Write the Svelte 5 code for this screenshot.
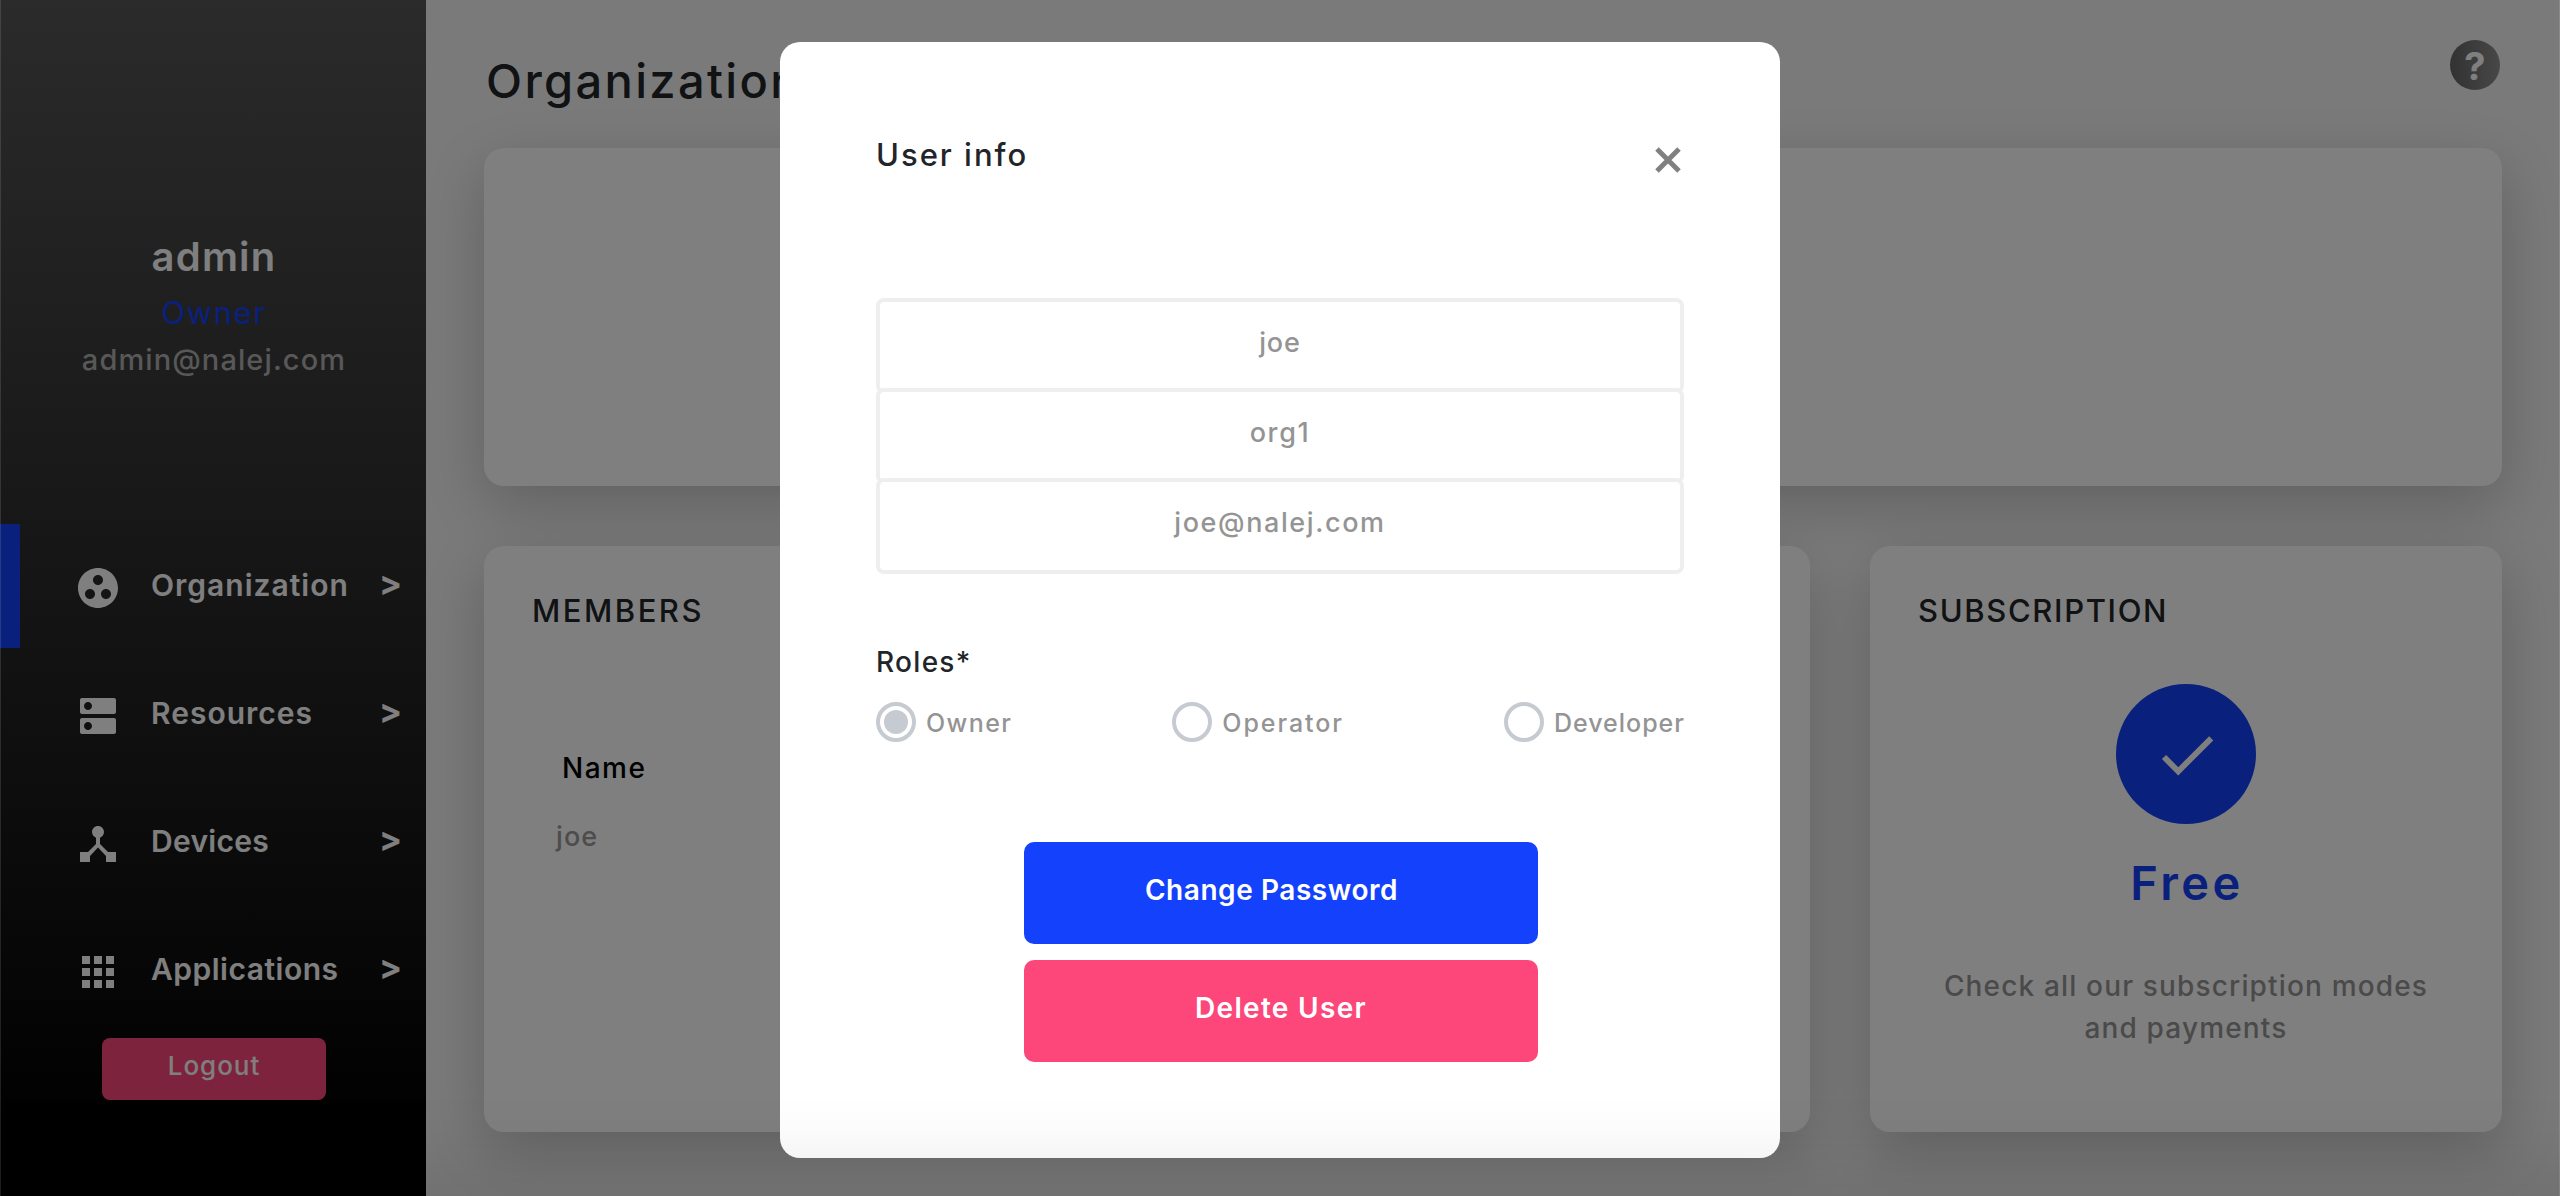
<script>
  const nav = [
    { label: 'Organization', icon: 'group', active: true, cls: 'l1' },
    { label: 'Resources', icon: 'dns', active: false, cls: 'l2' },
    { label: 'Devices', icon: 'hub', active: false, cls: 'l3' },
    { label: 'Applications', icon: 'apps', active: false, cls: 'l4' }
  ];
  const icons = {
    group: 'M12 2C6.48 2 2 6.48 2 12s4.48 10 10 10 10-4.48 10-10S17.52 2 12 2zM8 17.5c-1.38 0-2.5-1.12-2.5-2.5s1.12-2.5 2.5-2.5 2.5 1.12 2.5 2.5-1.12 2.5-2.5 2.5zM9.5 8c0-1.38 1.12-2.5 2.5-2.5s2.5 1.12 2.5 2.5-1.12 2.5-2.5 2.5S9.5 9.38 9.5 8zm6.5 9.5c-1.38 0-2.5-1.12-2.5-2.5s1.12-2.5 2.5-2.5 2.5 1.12 2.5 2.5-1.12 2.5-2.5 2.5z',
    dns: 'M20 13H4c-.55 0-1 .45-1 1v6c0 .55.45 1 1 1h16c.55 0 1-.45 1-1v-6c0-.55-.45-1-1-1zM7 19c-1.1 0-2-.9-2-2s.9-2 2-2 2 .9 2 2-.9 2-2 2zM20 3H4c-.55 0-1 .45-1 1v6c0 .55.45 1 1 1h16c.55 0 1-.45 1-1V4c0-.55-.45-1-1-1zM7 9c-1.1 0-2-.9-2-2s.9-2 2-2 2 .9 2 2-.9 2-2 2z',
    hub: 'M17 16l-4-4V8.82C14.16 8.4 15 7.3 15 6c0-1.66-1.34-3-3-3S9 4.34 9 6c0 1.3.84 2.4 2 2.82V12l-4 4H3v5h5v-3.05l4-4.2 4 4.2V21h5v-5h-4z',
    apps: 'M4 8h4V4H4v4zm6 12h4v-4h-4v4zm-6 0h4v-4H4v4zm0-6h4v-4H4v4zm6 0h4v-4h-4v4zm6-10v4h4V4h-4zm-6 4h4V4h-4v4zm6 6h4v-4h-4v4zm0 6h4v-4h-4v4z'
  };
  const fields = [
    { value: 'joe', cls: 'f1' },
    { value: 'org1', cls: 'f2' },
    { value: 'joe@nalej.com', cls: 'f3' }
  ];
  const roles = [
    { name: 'Owner', cls: 'r1' },
    { name: 'Operator', cls: 'r2' },
    { name: 'Developer', cls: 'r3' }
  ];
  let selected = 'Owner';
</script>

<div class="app">
  <aside>
    <div class="profile">
      <div class="name">admin</div>
      <div class="role">Owner</div>
      <div class="email">admin@nalej.com</div>
    </div>
    <nav>
      {#each nav as item}
        <a class="item" class:active={item.active} href="#top">
          <svg viewBox="0 0 24 24"><path d={icons[item.icon]} /></svg>
          <span class="label {item.cls}">{item.label}</span>
          <span class="chev">&gt;</span>
        </a>
      {/each}
    </nav>
    <button class="logout">Logout</button>
  </aside>

  <main>
    <header>
      <h1>Organization</h1>
      <div class="help">?</div>
    </header>
    <section class="card banner"></section>
    <div class="row">
      <section class="card">
        <h2 class="members">MEMBERS</h2>
        <div class="th">Name</div>
        <div class="td">joe</div>
      </section>
      <section class="card">
        <h2 class="subs">SUBSCRIPTION</h2>
        <div class="plan">
          <div class="badge">
            <svg viewBox="0 0 24 24"><path d="M9 16.17L4.83 12l-1.42 1.41L9 19 21 7l-1.41-1.41z" /></svg>
          </div>
          <div class="free">Free</div>
          <p>Check all our subscription modes<br />and payments</p>
        </div>
      </section>
    </div>
  </main>
</div>

<div class="overlay">
  <div class="modal">
    <div class="head">
      <h3>User info</h3>
      <svg class="close" viewBox="0 0 26 26"><path d="M2 2L24 24M24 2L2 24" /></svg>
    </div>
    <div class="fields">
      {#each fields as f}
        <div class="field {f.cls}">{f.value}</div>
      {/each}
    </div>
    <div class="roles">Roles*</div>
    <div class="options">
      {#each roles as r}
        <div class="option">
          <span class="radio" class:on={selected === r.name}></span>
          <span class="opt {r.cls}">{r.name}</span>
        </div>
      {/each}
    </div>
    <button class="btn change">Change Password</button>
    <button class="btn delete">Delete User</button>
  </div>
</div>
<div class="shade"></div>

<style>
  :global(body) {
    overflow: hidden;
    font-family: Inter, Roboto, sans-serif;
  }
  h1, h2, h3, p { margin: 0; font-weight: 500; }
  button { border: 0; padding: 0; font-family: inherit; color: #fff; }
  .app { display: flex; height: 1196px; background: #f4f4f4; }

  aside {
    width: 426px;
    flex: none;
    background: linear-gradient(#565656, #000 96%);
    color: #fff;
  }
  .profile { box-sizing: border-box; height: 524px; padding-top: 233px; text-align: center; }
  .name { padding-left: 2px; font-size: 40px; line-height: 48px; font-weight: 600; letter-spacing: 1.2px; }
  .role { margin-top: 12px; padding-left: 2px; font-size: 31px; line-height: 40px; letter-spacing: 1.6px; color: #1441fb; }
  .email { margin-top: 7px; padding-left: 2px; font-size: 29px; line-height: 40px; font-weight: 500; letter-spacing: 1.1px; color: #b0b0b0; }
  .item {
    box-sizing: border-box;
    display: flex;
    align-items: center;
    height: 124px;
    margin-bottom: 4px;
    padding: 0 24px 0 54px;
    border-left: 20px solid transparent;
    color: #fff;
    text-decoration: none;
    font-size: 30px;
    font-weight: 600;
  }
  .item.active { border-color: #1441fb; }
  .item svg { width: 48px; height: 48px; margin-top: 4px; fill: #fff; }
  .label { margin: 0 auto 3px 29px; line-height: 40px; }
  .l1 { letter-spacing: 1px; }
  .l2 { letter-spacing: 1px; }
  .l3 { letter-spacing: 0.3px; }
  .l4 { letter-spacing: 0.5px; }
  .chev { font-size: 34px; font-weight: 700; line-height: 40px; margin-bottom: 6px; }
  .logout {
    display: block;
    width: 224px;
    height: 62px;
    margin: 6px 0 0 102px;
    padding-bottom: 8px;
    border-radius: 8px;
    background: #fd477b;
    font-size: 26px;
    font-weight: 500;
    letter-spacing: 0.95px;
  }

  main { flex: 1; padding: 0 58px; color: #212529; }
  header { box-sizing: border-box; display: flex; justify-content: space-between; height: 148px; }
  h1 { margin: 53px 0 0 2px; font-size: 47px; line-height: 56px; letter-spacing: 2.35px; }
  .help {
    width: 50px;
    height: 50px;
    margin: 40px 2px 0 0;
    border-radius: 50%;
    background: linear-gradient(90deg, #646464, #909090);
    color: #fff;
    font-size: 38px;
    line-height: 52px;
    font-weight: 700;
    text-align: center;
  }
  .card { border-radius: 20px; background: #fff; box-shadow: 0 20px 60px rgba(0, 0, 0, 0.2); }
  .banner { height: 338px; margin-bottom: 60px; }
  .row { display: grid; grid-template-columns: 1326px 632px; gap: 60px; }
  .row .card { box-sizing: border-box; height: 586px; padding: 45px 0 0 48px; }
  h2 { font-size: 31px; line-height: 40px; }
  .members { letter-spacing: 2.5px; }
  .subs { letter-spacing: 1.65px; }
  .th { margin: 119px 0 0 30px; font-size: 28px; line-height: 36px; font-weight: 500; letter-spacing: 1.5px; color: #000; }
  .td { margin: 33px 0 0 24px; font-size: 27px; line-height: 36px; font-weight: 500; letter-spacing: 1.1px; color: #999; }
  .plan { margin: 53px 0 0 -48px; text-align: center; }
  .badge {
    display: flex;
    align-items: center;
    justify-content: center;
    width: 140px;
    height: 140px;
    margin: 0 auto;
    border-radius: 50%;
    background: #1441fb;
  }
  .badge svg { width: 70px; height: 70px; margin: 2px 0 0 2px; fill: #fff; }
  .free { margin-top: 29px; padding-left: 2px; font-size: 47px; line-height: 60px; font-weight: 600; letter-spacing: 3.4px; color: #1441fb; }
  .plan p { margin-top: 52px; font-size: 28px; line-height: 42px; font-weight: 500; letter-spacing: 1.16px; color: #959595; }

  .overlay {
    position: fixed;
    inset: 0;
    display: flex;
    justify-content: center;
    align-items: flex-start;
    background: rgba(0, 0, 0, 0.5);
    box-shadow: inset 1px 0 rgba(255, 255, 255, 0.12), inset -1px 0 rgba(255, 255, 255, 0.12);
  }
  .modal {
    box-sizing: border-box;
    width: 1000px;
    height: 1116px;
    margin-top: 42px;
    padding: 93px 96px 0;
    border-radius: 20px;
    background: #fff;
    color: #212529;
  }
  .head { display: flex; justify-content: space-between; height: 40px; }
  h3 { font-size: 31px; line-height: 40px; letter-spacing: 2px; }
  .close { width: 26px; height: 26px; margin: 12px 3px 0 0; fill: none; stroke: #808080; stroke-width: 5; }
  .fields { margin-top: 123px; }
  .field {
    box-sizing: border-box;
    height: 96px;
    border: 4px solid #eee;
    border-radius: 8px;
    background: #fff;
    color: #949494;
    font-size: 27px;
    line-height: 82px;
    font-weight: 500;
    text-align: center;
  }
  .field + .field { margin-top: -6px; }
  .f1 { letter-spacing: 0.9px; }
  .f2 { letter-spacing: 1.6px; }
  .f3 { letter-spacing: 1.6px; }
  .roles { margin-top: 70px; font-size: 28px; line-height: 36px; font-weight: 500; letter-spacing: 1.3px; }
  .options { display: flex; justify-content: space-between; margin-top: 22px; }
  .option { display: flex; align-items: center; height: 40px; color: #949494; font-size: 25px; font-weight: 500; }
  .radio {
    box-sizing: border-box;
    display: flex;
    align-items: center;
    justify-content: center;
    width: 40px;
    height: 40px;
    margin-right: 10px;
    border: 4px solid #c6cad1;
    border-radius: 50%;
  }
  .radio.on::after { content: ''; width: 24px; height: 24px; border-radius: 50%; background: #c6cad1; }
  .opt { padding-top: 2px; }
  .r1 { letter-spacing: 1.4px; }
  .r2 { letter-spacing: 1.95px; }
  .r3 { letter-spacing: 1px; margin-right: -1px; }
  .btn {
    display: block;
    width: 514px;
    height: 102px;
    margin-left: 148px;
    padding-bottom: 6px;
    border-radius: 10px;
    font-size: 28px;
    font-weight: 600;
  }
  .change { margin-top: 100px; padding-right: 19px; background: #1441fb; letter-spacing: 0.55px; }
  .delete { margin-top: 16px; background: #fd477b; letter-spacing: 1.3px; }

  .shade {
    position: fixed;
    inset: auto 0 0 0;
    height: 100px;
    background: linear-gradient(transparent, rgba(0, 0, 0, 0.01) 30%, rgba(0, 0, 0, 0.065));
    pointer-events: none;
  }
</style>
